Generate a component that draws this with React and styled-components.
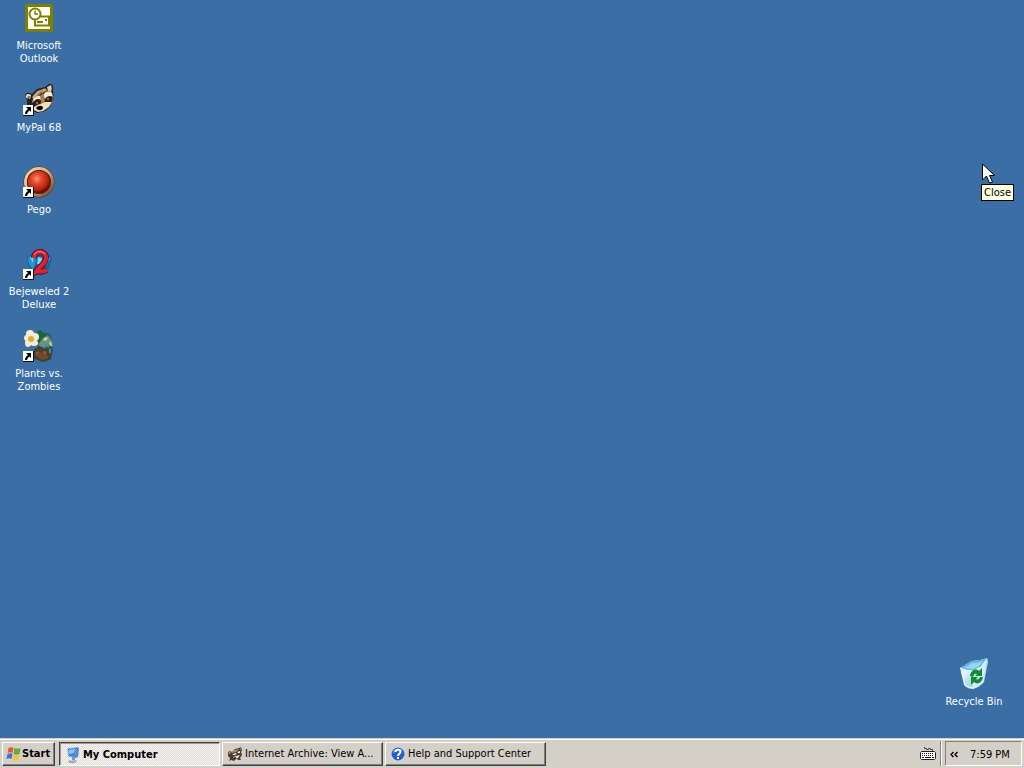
import React from 'react';
import styled, { createGlobalStyle, css } from 'styled-components';

const GlobalStyle = createGlobalStyle`
  * { box-sizing: border-box; }
  body {
    margin: 0;
    background: #3a6ea5;
    font-family: Tahoma, "DejaVu Sans Condensed", "Noto Sans", sans-serif;
    font-size: 11px;
    line-height: 13px;
    color: #000;
    cursor: default;
  }
  button { font: inherit; color: inherit; cursor: default; }
  svg { display: block; flex: none; }
`;

const Screen = styled.div`
  position: relative;
  display: flex;
  flex-direction: column;
  min-height: 100vh;
  overflow: hidden;
`;

const Workspace = styled.main`
  flex: 1;
  display: flex;
  justify-content: space-between;
  padding: 2px 11px 30px 0;
`;

const ShortcutColumn = styled.div`
  display: flex;
  flex-direction: column;
  justify-content: ${(p) => (p.$atEnd ? 'flex-end' : 'flex-start')};
  gap: 18px;
`;

const ShortcutButton = styled.button`
  display: flex;
  flex-direction: column;
  align-items: center;
  gap: 5px;
  width: 78px;
  min-height: ${(p) => (p.$short ? '50px' : '64px')};
  padding: 0;
  border: 0;
  background: none;
  color: #fff;
`;

const ShortcutLabel = styled.span`
  max-width: 66px;
  text-align: center;
`;

const Taskbar = styled.footer`
  display: flex;
  align-items: center;
  height: 30px;
  padding: 0 2px;
  background: #d4d0c8;
  border-top: 1px solid #d4d0c8;
  box-shadow: inset 0 1px 0 #fff;
`;

const raised = css`
  border: 1px solid;
  border-color: #fff #404040 #404040 #fff;
  box-shadow: inset -1px -1px 0 #808080;
  background: #d4d0c8;
`;

const pressed = css`
  border: 1px solid;
  border-color: #404040 #fff #fff #404040;
  box-shadow: inset 1px 1px 0 #a09c94;
  background: repeating-conic-gradient(#f8f6f4 0 25%, #dedad4 0 50%) 0 0 / 2px 2px;
`;

const BarButton = styled.button`
  display: flex;
  align-items: center;
  height: 24px;
  min-width: 0;
  ${(p) => (p.$active ? pressed : raised)}
  font-weight: ${(p) => (p.$bold ? 700 : 400)};
`;

const StartButton = styled(BarButton)`
  width: 53px;
  padding: 0 2px;
  margin-right: 4px;
`;

const TaskList = styled.nav`
  flex: 1;
  display: flex;
  gap: 2px;
  min-width: 0;
`;

const TaskButton = styled(BarButton)`
  flex: 0 1 161px;
  gap: 2px;
  padding: ${(p) => (p.$active ? '2px 4px 0 5px' : '0 4px')};
`;

const TaskLabel = styled.span`
  overflow: hidden;
  white-space: nowrap;
  text-overflow: ellipsis;
`;

const InputIndicator = styled.button`
  display: flex;
  padding: 0;
  border: 0;
  background: none;
  margin-right: 4px;
`;

const Grip = styled.span`
  width: 2px;
  height: 25px;
  margin-right: 3px;
  border-left: 1px solid #808080;
  border-right: 1px solid #fff;
`;

const Tray = styled.div`
  display: flex;
  align-items: center;
  gap: 12px;
  height: 25px;
  width: 77px;
  padding: 2px 0 0 4px;
  border: 1px solid;
  border-color: #808080 #fff #fff #808080;
  white-space: nowrap;
`;

const Expand = styled.button`
  display: flex;
  padding: 0;
  border: 0;
  background: none;
`;

const Pointer = styled.svg`
  position: absolute;
  top: 163px;
  right: 29px;
`;

const Tooltip = styled.div`
  position: absolute;
  top: 184px;
  right: 10px;
  padding: 1px 2px;
  border: 1px solid #000;
  background: #ffffe1;
`;

const Arrow = () => (
  <g>
    <path d="M0 21h11v11H0z" fill="#111" />
    <path d="M0 21h10v10H0z" fill="#fff" />
    <path d="M3 23h5v5L6.500 26.500C5 27.500 4.500 28.500 4 30H2c0-2 1-4 3-5z" fill="#000" />
  </g>
);

const OutlookIcon = () => (
  <svg width="32" height="32" viewBox="0 0 32 32">
    <path d="M2 2h28v28H2z" fill="#808000" />
    <path d="M5 5h22v22H5z" fill="#fffff2" />
    <path d="M15 14.500h11v9H12v-6" fill="#fff" stroke="#808000" strokeWidth="2" />
    <path d="M14 20h6M22 18h2" stroke="#808000" strokeWidth="2" />
    <circle cx="12" cy="12" r="5.500" fill="#fff" stroke="#808000" strokeWidth="2" />
    <path d="M12 8.500V12h3" fill="none" stroke="#808000" strokeWidth="1.500" />
  </svg>
);

const RaccoonArt = () => (
  <g>
    <path d="M4 16C1 13 2 8 6 9l3 1 5-5 8-2 4-3c3-1 5 2 4 7l1 7-3 8-6 5-8 2-5-3-5-5z" fill="#2a211b" />
    <path d="M3 14c-1-4 2-5 5-3l-1 4z" fill="#e9dcc5" />
    <path d="M4 13l3-1-1 3z" fill="#5b4230" />
    <path d="M24 3l4-2c1 2 1 5 0 7l-3-1z" fill="#e3cba7" />
    <path d="M9 13l5-6 8-3 3 3-6 2-5 4-3 5z" fill="#8f7454" />
    <path d="M10 12l5-5 5-1-5 4-5 6zM20 5l4 0-5 4z" fill="#c9ac80" />
    <path d="M9 19c1-5 5-8 9-7l3 3-3 1c-3-2-6-1-9 3z" fill="#f7ead2" />
    <path d="M20 12c1-4 5-6 9-3l1 4c-3-2-6-1-8 2z" fill="#f7ead2" />
    <path d="M17 12l3-3 2 6-1 6-5 3 2-6z" fill="#a87c4f" />
    <path d="M11 23c3-2 5-3 7-3l4-2 7 0-3 5-6 4-5 1-4-2z" fill="#f4dfbb" />
    <path d="M13 24c2-3 7-3 7 0-1 3-5 3-7 0z" fill="#090807" />
    <circle cx="14" cy="19" r="1" fill="#b98249" />
    <circle cx="25" cy="15" r="1" fill="#b98249" />
    <path d="M27 22c3-3 3-7 3-10" fill="none" stroke="#8d7153" />
  </g>
);

const MyPalIcon = () => (
  <svg width="32" height="32" viewBox="0 0 32 32">
    <RaccoonArt />
    <Arrow />
  </svg>
);

const PegoIcon = () => (
  <svg width="32" height="32" viewBox="0 0 32 32">
    <defs>
      <radialGradient id="pegoRed" cx="40%" cy="35%" r="65%">
        <stop offset="0" stopColor="#ff9270" />
        <stop offset=".35" stopColor="#e4482c" />
        <stop offset=".75" stopColor="#bd2511" />
        <stop offset="1" stopColor="#680800" />
      </radialGradient>
      <linearGradient id="pegoRim" x1="0" y1="0" x2="1" y2="1">
        <stop offset="0" stopColor="#f1dfb4" />
        <stop offset=".5" stopColor="#cfac76" />
        <stop offset="1" stopColor="#6b4526" />
      </linearGradient>
    </defs>
    <circle cx="16" cy="16" r="15.500" fill="#56351d" />
    <circle cx="16" cy="16" r="13.500" fill="none" stroke="url(#pegoRim)" strokeWidth="3" />
    <circle cx="16" cy="16" r="12" fill="#64200f" />
    <circle cx="16" cy="16" r="11" fill="url(#pegoRed)" />
    <Arrow />
  </svg>
);

const BejeweledIcon = () => (
  <svg width="32" height="32" viewBox="0 0 32 32">
    <path d="M4 10l6-6 7-2 7 2 5 6-2 9-8 9-8-2-5-7z" fill="#1466a5" />
    <path d="M5 10l6-3 2 6-3 9-4-6zM22 5l5 5-3 7-5-2z" fill="#2196cf" />
    <path d="M7 9l3-2 0 8zM15 9l4 1-1 7-4-1zM25 9l2 2-3 3z" fill="#83d6f4" />
    <path d="M11 10c0-8 12-8 12 0 0 6-8 9-10 14 4-2 6 1 11-2" fill="none" stroke="#62111f" strokeWidth="6" />
    <path d="M11 10c0-8 12-8 12 0 0 6-8 9-10 14 4-2 6 1 11-2" fill="none" stroke="#dd2335" strokeWidth="4" />
    <path d="M11 7c2-5 9-4 11-1" fill="none" stroke="#ff8b8c" />
    <Arrow />
  </svg>
);

const PlantsIcon = () => (
  <svg width="32" height="32" viewBox="0 0 32 32">
    <path d="M14 2l3-2 4 3 6 1 2 6-1 4 2 6-2 9-8 3-9-3 1-8 3-4-2-7z" fill="#285850" />
    <path d="M13 3l4-3 3 4 4-1-1 5-5 3-4-3z" fill="#176b39" />
    <path d="M19 9l6-4 4 6 1 5-6-1-5 3-3-4z" fill="#6f917e" />
    <path d="M22 7l3 1-2 3-3-1zM26 12l2 0 1 4-2 0z" fill="#bed2aa" />
    <path d="M11 19l6-3 6 3 6 1-1 9-8 3-9-4z" fill="#46402c" />
    <path d="M12 25l3-5 4 4 4-3 2 7-6 2z" fill="#6e4b2b" />
    <path d="M13 23h2M20 22l3 1" stroke="#b44a33" strokeWidth="2" />
    <path d="M21 18l2-3 3 2M27 19v4M15 13l3 3" stroke="#4a9297" strokeWidth="2" fill="none" />
    <g fill="#f4ecd6">
      <ellipse cx="7" cy="4" rx="4" ry="4" />
      <ellipse cx="12" cy="7" rx="4" ry="4" />
      <ellipse cx="11" cy="13" rx="4" ry="3" />
      <ellipse cx="5" cy="13" rx="3" ry="4" />
      <ellipse cx="4" cy="8" rx="3" ry="3" />
    </g>
    <circle cx="8" cy="9" r="3" fill="#dfac2a" />
    <Arrow />
  </svg>
);

const RecycleIcon = () => (
  <svg width="32" height="32" viewBox="0 0 32 32">
    <defs>
      <linearGradient id="binFront" x1="0" y1="0" x2="1" y2="1">
        <stop offset="0" stopColor="#8acbed" />
        <stop offset=".3" stopColor="#e6f6fc" />
        <stop offset=".6" stopColor="#a8d8f0" />
        <stop offset="1" stopColor="#f0fbff" />
      </linearGradient>
    </defs>
    <path d="M2 10L14 3q8 0 15-3l1 4-4 20q-4 5-11 7Q9 31 6 27z" fill="url(#binFront)" />
    <path d="M2 10l11-7q8 0 16-3l-6 9-8 4q-7 0-13-3z" fill="#62b2de" />
    <path d="M6 10l8-5q6 0 12-2l-6 6-5 2q-5 0-9-1z" fill="#94d6f2" />
    <path d="M15 13l8-4 6-8-4 23q-4 5-10 7z" fill="#d0ecf8" />
    <path d="M2 10q6 3 13 3l8-4 6-8" fill="none" stroke="#f2fcff" />
    <path d="M4 14l3 13q4 3 8 3" fill="none" stroke="#eaf8ff" />
    <g fill="#128a32">
      <path d="M12 18c1-6 6-8 9-5l3-3v8h-7l2-2c-2-1-3 0-4 3z" />
      <path d="M25 19c-1 6-6 8-9 5l-3 3v-8h7l-2 2c2 1 3 0 4-2z" />
    </g>
  </svg>
);

const WindowsFlag = () => (
  <svg width="17" height="16" viewBox="0 0 16 16">
    <path d="M3 2c2-1 3-1 5 0L7 7C5 6 4 6 2 7z" fill="#e8572b" />
    <path d="M9 2c2 1 4 1 6 0l-1 6c-2 1-4 1-6 0z" fill="#64a93c" />
    <path d="M2 8c2-1 3-1 5 0l-1 5c-2-1-3-1-5 0z" fill="#3d73cf" />
    <path d="M8 9c2 1 4 1 6 0l-1 5c-2 1-4 1-6 0z" fill="#f4c533" />
  </svg>
);

const ComputerIcon = () => (
  <svg width="16" height="16" viewBox="0 0 16 16">
    <path d="M2 1l9-1 3 1-1 9-3 1-7-1z" fill="#a5c3ea" />
    <path d="M11 0l3 1-1 9-3 1z" fill="#5f88c2" />
    <path d="M3 2l8-1-1 9-6-1z" fill="#3f86e0" />
    <path d="M4 3l6-1-1 4-5 1z" fill="#8cc7fb" />
    <path d="M7 10h3v3l2 1-3 2H5l-2-2 4-1z" fill="#8296b5" />
    <path d="M5 14h5" stroke="#dce9f7" />
  </svg>
);

const RaccoonSmall = () => (
  <svg width="16" height="16" viewBox="0 0 16 16">
    <path d="M1 7l1-2 3 1 3-3 4-1 2-1 1 3-1 2 1 3-2 3 1 2h-2l-3-1-2 2-3-1-2 1 1-3-2-2z" fill="#4b3d31" />
    <path d="M4 6l4-2 4-1-3 3-4 1z" fill="#ad9270" />
    <path d="M5 9l3-2 2 1-2 1zM10 6l3-1v2l-2 0z" fill="#f5e7ce" />
    <path d="M6 11l3-1 4-1-2 3-3 1z" fill="#eadbc0" />
    <path d="M2 6l2 1-2 1zM13 2l1 1-1 1z" fill="#d2b68b" />
    <circle cx="8" cy="12" r="1" fill="#111" />
  </svg>
);

const HelpIcon = () => (
  <svg width="16" height="16" viewBox="0 0 16 16">
    <circle cx="8" cy="8" r="7.500" fill="#c9dafa" />
    <circle cx="8" cy="8" r="6.500" fill="#285fc1" />
    <path d="M3 7c0-4 7-6 10-2-3-1-6 0-10 2z" fill="#6c9cec" />
    <path d="M5.500 6c0-3 5-3 5 0C10.500 8 8 7.500 8 10" fill="none" stroke="#fff" strokeWidth="2" />
    <path d="M7 11h2v2H7z" fill="#fff" />
  </svg>
);

const KeyboardIcon = () => (
  <svg width="16" height="16" viewBox="0 0 16 16">
    <path d="M4.500 1v1.500h2v1h2v-1h2v1h2V5" fill="none" stroke="#444" />
    <path d="M1.500 5.500h13l1 1v6l-1 1h-13l-1-1v-6z" fill="#fff" stroke="#222" />
    <path d="M2 7.500h12M2 9.500h12" stroke="#111" strokeDasharray="1 1" />
    <path d="M2 11.500h2m1 0h6m1 0h2" stroke="#111" />
  </svg>
);

const ChevronsIcon = () => (
  <svg width="8" height="7" viewBox="0 0 8 7">
    <path d="M3.500 1L1 3.500 3.500 6M7.500 1L5 3.500 7.500 6" fill="none" stroke="#000" strokeWidth="1.400" />
  </svg>
);

const shortcuts = [
  { label: 'Microsoft Outlook', Icon: OutlookIcon },
  { label: 'MyPal 68', Icon: MyPalIcon },
  { label: 'Pego', Icon: PegoIcon },
  { label: 'Bejeweled 2 Deluxe', Icon: BejeweledIcon },
  { label: 'Plants vs. Zombies', Icon: PlantsIcon },
];

const tasks = [
  { label: 'My Computer', Icon: ComputerIcon, active: true },
  { label: 'Internet Archive: View A...', Icon: RaccoonSmall },
  { label: 'Help and Support Center', Icon: HelpIcon },
];

const Shortcut = ({ label, Icon, short }) => (
  <ShortcutButton type="button" $short={short}>
    <Icon />
    <ShortcutLabel>{label}</ShortcutLabel>
  </ShortcutButton>
);

export default function App() {
  return (
    <Screen>
      <GlobalStyle />
      <Workspace>
        <ShortcutColumn>
          {shortcuts.map((s) => (
            <Shortcut key={s.label} {...s} />
          ))}
        </ShortcutColumn>
        <ShortcutColumn $atEnd>
          <Shortcut label="Recycle Bin" Icon={RecycleIcon} short />
        </ShortcutColumn>
      </Workspace>
      <Taskbar>
        <StartButton type="button" $bold>
          <WindowsFlag />
          Start
        </StartButton>
        <TaskList aria-label="Open windows">
          {tasks.map(({ label, Icon, active }) => (
            <TaskButton key={label} type="button" $active={active} $bold={active}>
              <Icon />
              <TaskLabel>{label}</TaskLabel>
            </TaskButton>
          ))}
        </TaskList>
        <InputIndicator type="button" aria-label="Keyboard">
          <KeyboardIcon />
        </InputIndicator>
        <Grip />
        <Tray>
          <Expand type="button" aria-label="Show hidden icons">
            <ChevronsIcon />
          </Expand>
          <time>7:59 PM</time>
        </Tray>
      </Taskbar>
      <Pointer width="13" height="21" viewBox="0 0 13 21">
        <path d="M.500 1v16l4-4 3 7 3-1-3-6.500h5z" fill="#fff" stroke="#000" />
      </Pointer>
      <Tooltip role="tooltip">Close</Tooltip>
    </Screen>
  );
}
